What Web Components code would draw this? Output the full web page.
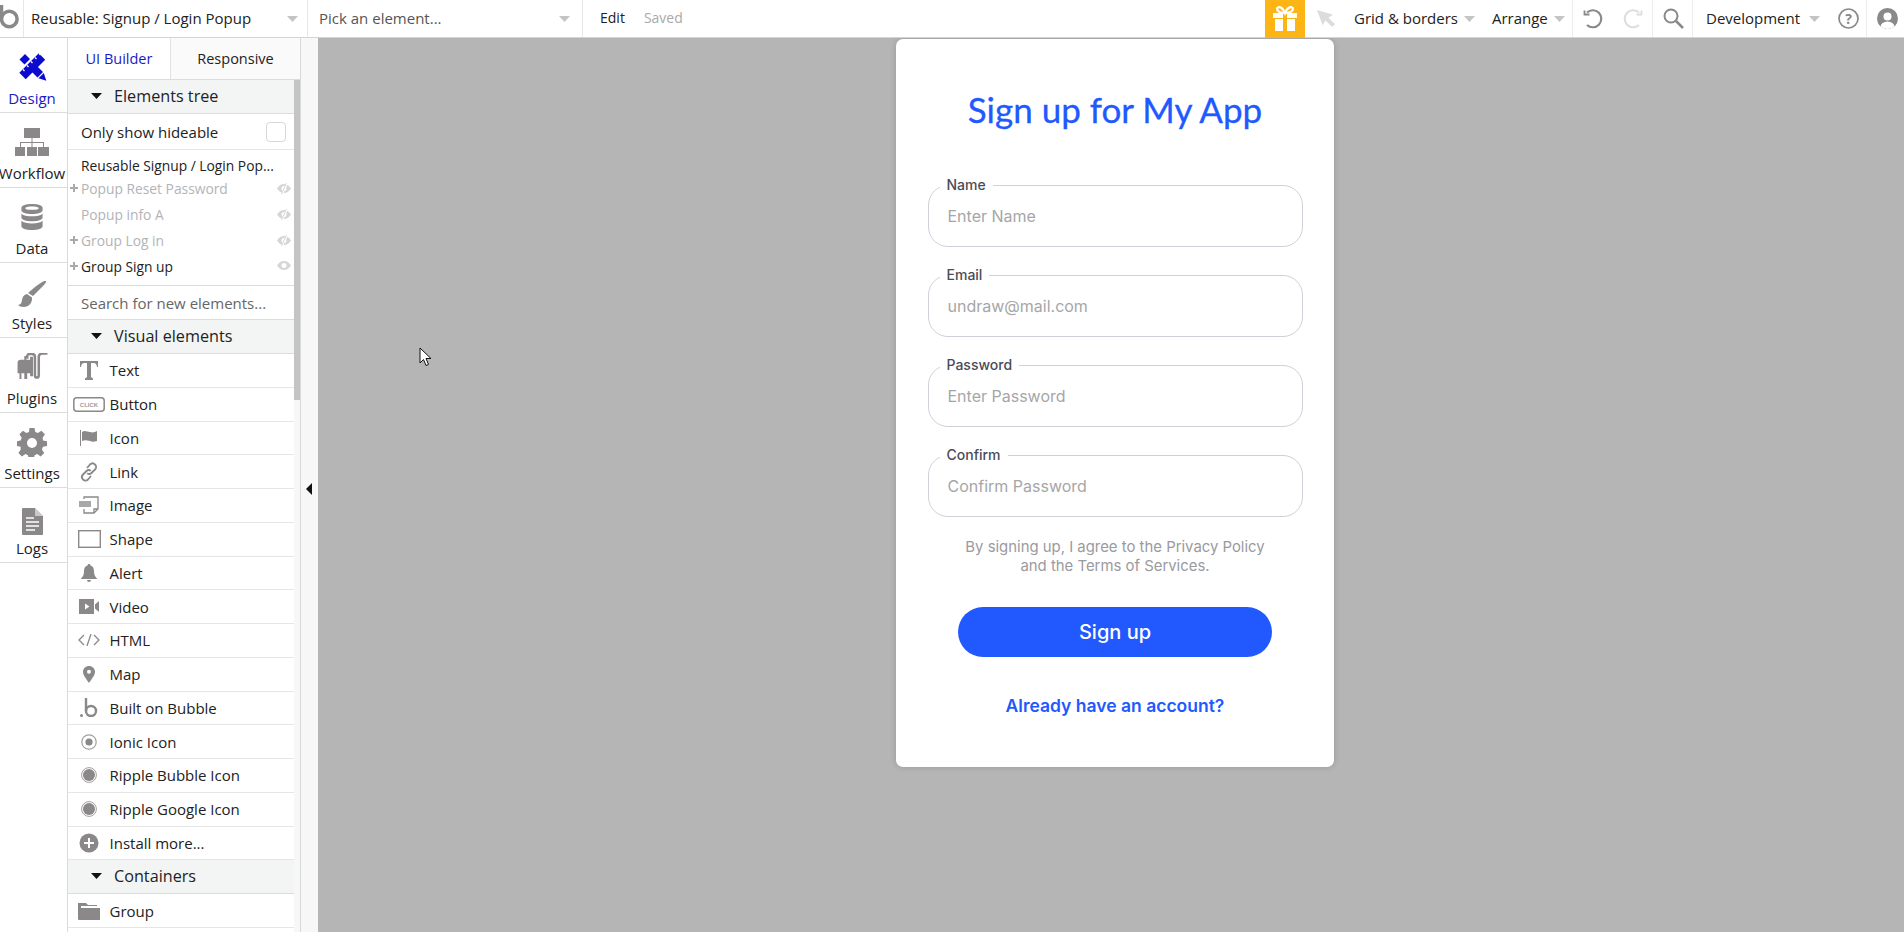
<!DOCTYPE html>
<html lang="en"><head><meta charset="utf-8"><title>Bubble editor</title>
<style>
html,body{margin:0;height:100%;overflow:hidden}
body{font-family:"Open Sans",sans-serif;color:#222;background:#b5b5b5}
editor-app{height:932px}
</style></head><body>
<editor-app>
  <top-bar slot="top"></top-bar>
  <side-nav slot="nav"></side-nav>
  <element-panel slot="panel"></element-panel>
  <signup-card slot="canvas"></signup-card>
</editor-app>
<script>
const I={
 design:'<svg width="29" height="28" viewBox="0 0 28 28"><path d="M23.500 3.500L4 23" stroke="#0b0bd0" stroke-width="9" fill="none"/><path d="M20.500 .5l1.500 1.500M16.500 4.500l1.500 1.500M12.500 8.500l1.500 1.500M8.500 12.500l1.500 1.500M4.500 16.500l1.500 1.500" stroke="#fff" stroke-width="1.200" fill="none"/><path d="M1 6.500L6.500 1 11.500 6 6 11.500zM10.500 16L16 10.500 24.500 19 19 24.500z" fill="#0b0bd0"/><path d="M20 25.300l5.300-5.300 2.500 7.800z" fill="#0b0bd0"/></svg>',
 workflow:'<svg width="34" height="28" viewBox="0 0 34 28" fill="#8a8888"><rect x="9" y="0" width="16" height="10"/><rect x="0" y="19" width="10" height="9"/><rect x="12" y="19" width="10" height="9"/><rect x="23" y="19" width="11" height="9"/><path d="M16.500 10h1v4h11.500v5h-1v-4h-10.500v4h-1v-4H6v4H5v-5h11.500z"/></svg>',
 data:'<svg width="22" height="26" viewBox="0 0 22 27" fill="#8a8888"><path fill-rule="evenodd" d="M11 0c6 0 11 1.500 11 4v2.500c0 2.500-5 4-11 4S0 9 0 6.500V4c0-2.500 5-4 11-4zm0 2.500C7 2.500 4 3.200 4 4.300S7 6 11 6s7-.6 7-1.700-3-1.800-7-1.800z"/><path d="M0 10c2 2 6 2.800 11 2.800S20 12 22 10v4c0 2.500-5 4-11 4S0 16.500 0 14zM0 17.500c2 2 6 2.800 11 2.800s9-.8 11-2.800V23c0 2.500-5 4-11 4S0 25.500 0 23z"/></svg>',
 styles:'<svg width="30" height="28" viewBox="0 0 30 28" fill="#8a8888"><path d="M29 0c.6 1-1 3-5 7l-8 8-5-3 7-6c5-4 10-7 11-6zM10 13l5 3.500c.5 5-3 9.500-8 9.500-3 0-5-1-6-2 3-.5 3.500-2 4-5 .5-3 2-5.500 5-6z"/></svg>',
 plugins:'<svg width="31" height="27" viewBox="0 0 31 28" fill="#8a8888"><path d="M3 7h4V3h2v4h4V4h3v20h-3v-3h-3v6H7v-6H4v6H2v-6H0V10c0-2 1.500-3 3-3z"/><path d="M10 6V4c0-2 1-3 3-3h2c2 0 3 1 3 3v19c0 1.500.7 2.500 2 2.500s2-1 2-2.500V4c0-2 1.500-3.500 3.500-3.500H31" fill="none" stroke="#8a8888" stroke-width="2.600"/></svg>',
 settings:'<svg width="30" height="30" viewBox="0 0 30 30"><path fill="#8a8888" fill-rule="evenodd" d="M12.500 1h5l.8 4 2.600 1.100 3.500-2.300 3.500 3.500-2.300 3.500L26 13.400l4 .8v4.800l-4 .8-1.100 2.600 2.300 3.500-3.500 3.500-3.500-2.300-2.600 1.100-.8 3.800h-5l-.8-3.800-2.600-1.100-3.500 2.300-3.500-3.500 2.300-3.500L3.600 19.800 0 19v-4.800l3.600-.8 1.100-2.600-2.300-3.500 3.500-3.500 3.500 2.300L12 5zM15 11a5 5 0 1 0 0 10 5 5 0 0 0 0-10z"/></svg>',
 logs:'<svg width="21" height="27" viewBox="0 0 21 27"><path fill="#8a8888" d="M1 0h12l8 8v18a1 1 0 0 1-1 1H1a1 1 0 0 1-1-1V1a1 1 0 0 1 1-1z"/><path d="M4 10h8M4 14h13M4 18h13M4 22h9" stroke="#fff" stroke-width="1.300"/><path d="M13 0v8h8" fill="#fff" opacity=".55"/></svg>',
 text:'<svg width="18" height="19" viewBox="0 0 18 19" fill="#8a8888"><path d="M0 0h18v6h-1c-.3-2.500-1.200-4-3.500-4H11v14l2 1.500V19H5v-1.500L7 16V2H4.500C2.200 2 1.300 3.500 1 6H0z"/></svg>',
 button:'<svg width="32" height="15" viewBox="0 0 32 15"><rect x=".8" y=".8" width="30.400" height="13.400" rx="3" fill="#fff" stroke="#8a8888" stroke-width="1.500"/><text x="16" y="9.800" font-family="Liberation Sans" font-size="6" font-weight="700" text-anchor="middle" fill="#9a9a9a">CLICK</text></svg>',
 icon:'<svg width="18" height="16" viewBox="0 0 18 16" fill="#8a8888"><rect width="1" height="16" x="0"/><path d="M2 2c3-2 5 0 8 0 3 1 5 0 7-1v10c-3 1-5 1-7 0-3-1-6-1-8 0z"/></svg>',
 link:'<svg width="20" height="20" viewBox="0 0 20 20" fill="none" stroke="#8a8888" stroke-width="1.800"><path d="M8 6l3-3.500c1.500-1.500 3.500-1.500 5 0s1.500 3.500 0 5l-3.500 3.500c-1.300 1.200-3 1.200-4.300.2"/><path d="M12 14l-3 3.500c-1.500 1.500-3.500 1.500-5 0s-1.500-3.500 0-5L7.500 9c1.300-1.200 3-1.200 4.300-.2"/></svg>',
 image:'<svg width="20" height="18" viewBox="0 0 20 18" fill="none" stroke="#8a8888" stroke-width="1.300"><path d="M5 3V1h14v12l-4 4H5v-4"/><path d="M19 13h-4v4"/><rect x="0" y="5" width="12" height="6" fill="#a8a8a8" stroke="none"/></svg>',
 shape:'<svg width="23" height="18" viewBox="0 0 23 18"><rect x=".7" y=".7" width="21.600" height="16.600" fill="#fff" stroke="#8a8888" stroke-width="1.400"/></svg>',
 alert:'<svg width="16" height="18" viewBox="0 0 16 18" fill="#8a8888"><path d="M8 0c1 0 1.500.6 1.500 1.500C12 2.300 13 4.500 13 7c0 4 1 5.500 3 7.500V15H0v-.5C2 12.500 3 11 3 7c0-2.500 1-4.700 3.500-5.500C6.500.6 7 0 8 0zM6 16h4c0 1.200-1 2-2 2s-2-.8-2-2z"/></svg>',
 video:'<svg width="20" height="15" viewBox="0 0 20 15"><rect width="15" height="15" fill="#8a8888"/><path d="M16 5.500l4-3.500v11l-4-3.500z" fill="#8a8888"/><path d="M6 4.500l4.500 3-4.500 3z" fill="#fff"/></svg>',
 html:'<svg width="22" height="12" viewBox="0 0 22 12" fill="none" stroke="#8a8888" stroke-width="1.300"><path d="M6 1L1 6l5 5M16 1l5 5-5 5M13 0L9 12"/></svg>',
 map:'<svg width="12" height="17" viewBox="0 0 12 17"><path fill="#8a8888" fill-rule="evenodd" d="M6 0c3.300 0 6 2.600 6 5.800C12 9.500 8 14 6 17 4 14 0 9.500 0 5.800 0 2.600 2.700 0 6 0zm0 3.800a2 2 0 1 0 0 4 2 2 0 0 0 0-4z"/></svg>',
 built:'<svg width="18" height="19" viewBox="0 0 18 19"><circle cx="1.500" cy="17.500" r="1.500" fill="#8a8888"/><path d="M6 0v13" stroke="#8a8888" stroke-width="2.400" fill="none"/><circle cx="11" cy="13" r="5" fill="none" stroke="#8a8888" stroke-width="2.400"/></svg>',
 ionic:'<svg width="16" height="16" viewBox="0 0 16 16"><circle cx="8" cy="8" r="7.200" fill="none" stroke="#a0a0a0" stroke-width="1.200"/><circle cx="8" cy="8" r="3.600" fill="#8a8888"/></svg>',
 ripple:'<svg width="16" height="16" viewBox="0 0 16 16"><circle cx="8" cy="8" r="7.400" fill="none" stroke="#a0a0a0" stroke-width="1"/><circle cx="8" cy="8" r="6" fill="#8a8888"/></svg>',
 more:'<svg width="20" height="20" viewBox="0 0 20 20"><circle cx="10" cy="10" r="9.500" fill="#8a8888"/><path d="M10 5v10M5 10h10" stroke="#fff" stroke-width="2"/></svg>',
 group:'<svg width="22" height="18" viewBox="0 0 22 18" fill="#8a8888"><path d="M0 1h8l2 2h9v1H3v2H0z"/><path d="M0 6h22v12H1a1 1 0 0 1-1-1z"/></svg>',
 eye:'<svg width="14" height="9" viewBox="0 0 14 9"><path fill="#d6d6d6" fill-rule="evenodd" d="M7 0c3 0 5.500 2 7 4.500C12.500 7 10 9 7 9S1.500 7 0 4.500C1.500 2 4 0 7 0zm0 2a2.500 2.500 0 1 0 0 5 2.500 2.500 0 0 0 0-5z"/></svg>',
 eyeoff:'<svg width="14" height="11" viewBox="0 0 14 11"><path fill="#d6d6d6" fill-rule="evenodd" d="M7 1c3 0 5.500 2 7 4.500C12.500 8 10 10 7 10S1.500 8 0 5.500C1.500 3 4 1 7 1zm0 2a2.500 2.500 0 1 0 0 5 2.500 2.500 0 0 0 0-5z"/><path d="M10 0L5 11" stroke="#fff" stroke-width="2"/><path d="M9.500 0L4.500 11" stroke="#d6d6d6" stroke-width="1"/></svg>'
};
const caret=c=>`<svg width="11" height="6" viewBox="0 0 11 6"><path d="M0 0h11L5.500 6z" fill="${c}"/></svg>`;
function def(name,css,html){
  customElements.define(name,class extends HTMLElement{
    constructor(){super();this.attachShadow({mode:'open'});}
    connectedCallback(){this.shadowRoot.innerHTML=`<style>${css}</style>`+(typeof html==='function'?html(this):html);}
  });
}
def('editor-app',`
 :host{display:grid;grid-template:38px 1fr/318px 1fr;width:1904px;background:#b5b5b5;position:relative}
 .top{grid-column:1/3;min-width:0}
 .left{display:flex;background:#fff;min-height:0;overflow:hidden}
 .canvas{display:flex;justify-content:center;align-items:flex-start;background:#b5b5b5;overflow:hidden;position:relative}
 .strip{width:18px;background:#f7f7f7;border-left:1px solid #d9d9d9;box-sizing:border-box;display:flex;align-items:center;justify-content:center}
 .cursor{position:absolute;left:101px;top:309px}
`,`<div class="top"><slot name="top"></slot></div>
 <div class="left"><slot name="nav"></slot><slot name="panel"></slot>
  <div class="strip"><svg width="6" height="12" viewBox="0 0 6 12" style="margin-top:8px;margin-left:-2px"><path d="M6 0v12L0 6z" fill="#111"/></svg></div></div>
 <div class="canvas"><slot name="canvas"></slot>
  <svg class="cursor" width="14" height="21" viewBox="0 0 14 21"><path d="M1 1v15l3.500-3.500 2.500 6 2.500-1-2.500-6H12z" fill="#fff" stroke="#111" stroke-width="1"/></svg></div>`);
def('top-select',`
 :host{display:flex;align-items:center;justify-content:space-between;box-sizing:border-box;height:37px;border-right:1px solid #e8e8e8;font-size:15px}
 span{margin-top:-2px;white-space:nowrap}
`,h=>`<span style="color:${h.getAttribute('color')||'#222'}">${h.getAttribute('label')}</span>${caret('#c4c4c4')}`);
def('top-menu',`
 :host{display:flex;align-items:center;gap:6px;font-size:15px;color:#222;white-space:nowrap}
 span{margin-top:-2px}
`,h=>`<span>${h.getAttribute('label')}</span>${caret('#c4c4c4')}`);
def('top-bar',`
 :host{display:flex;height:38px;box-sizing:border-box;background:#fff;border-bottom:1px solid #d4d4d4;align-items:stretch}
 .logo{width:24px;border-right:1px solid #e8e8e8;overflow:hidden;flex:none;box-sizing:border-box}
 top-select{flex:none}
 .sel1{width:284px;padding:0 9px 0 7px}.sel2{width:275px;padding:0 12px 0 11px}
 .edit{display:flex;align-items:center;font-size:14px;gap:19px;margin-left:17px;color:#222}
 .edit span,.edit i{margin-top:-2px}
 .edit i{font-style:normal;color:#a9a9a9}
 .sp{flex:1}
 .gift{width:40px;height:38px;background:#fdb515;display:flex;align-items:center;justify-content:center;flex:none}
 .arrow{width:49px;display:flex;align-items:center;flex:none;padding-left:11px;box-sizing:border-box}
 .sec{display:flex;align-items:center;flex:none;box-sizing:border-box;height:37px}
 .b{border-right:1px solid #ececec}
`,`<div class="logo"><svg width="24" height="37" viewBox="0 0 24 37"><path d="M1.500 5v14" stroke="#8a8888" stroke-width="3.500" fill="none"/><circle cx="9.300" cy="19" r="7.800" fill="none" stroke="#8a8888" stroke-width="3.500"/></svg></div>
 <top-select class="sel1" label="Reusable: Signup / Login Popup"></top-select>
 <top-select class="sel2" label="Pick an element..." color="#555"></top-select>
 <div class="edit"><span>Edit</span><i>Saved</i></div>
 <div class="sp"></div>
 <div class="gift"><svg width="26" height="26" viewBox="0 0 26 26"><path fill="#fff" d="M1 7h10v5H1zM15 7h10v5H15zM3 13h8v12H3zM15 13h8v12h-8z"/><path d="M13 7C11 2 8 .5 6 1.500S5 7 13 7c8 0 9-4.500 7-5.500S15 2 13 7z" fill="none" stroke="#fff" stroke-width="2.200"/></svg></div>
 <div class="arrow"><svg width="19" height="19" viewBox="0 0 20 20"><path d="M1 1l17 5-5 3 7 7-3 3-7-7-3 5z" fill="#dcdcdc"/></svg></div>
 <div class="sec b" style="width:219px"><top-menu label="Grid &amp; borders"></top-menu><top-menu label="Arrange" style="margin-left:17px"></top-menu></div>
 <div class="sec b" style="width:80px;padding-left:10px;gap:20px">
  <svg width="20" height="21" viewBox="0 0 20 21" fill="none" stroke="#8a8888" stroke-width="2.200"><path d="M4 4.500A8.500 8.500 0 1 1 4 17"/><path d="M1.500 2.500v4h5" stroke-width="1.800"/></svg>
  <svg width="20" height="21" viewBox="0 0 20 21" fill="none" stroke="#dedede" stroke-width="2.200"><path d="M16 4.500A8.500 8.500 0 1 0 16 17"/><path d="M18.500 2.500v4h-5" stroke-width="1.800"/></svg>
 </div>
 <div class="sec b" style="width:40px;padding-left:10px"><svg width="21" height="21" viewBox="0 0 21 21" fill="none" stroke="#8a8888"><circle cx="8" cy="8" r="6.500" stroke-width="2"/><path d="M13 13l7 7" stroke-width="2.500"/></svg></div>
 <div class="sec" style="padding-left:13px;width:137px"><top-menu label="Development" style="gap:9px"></top-menu></div>
 <div class="sec b" style="width:37px;padding-left:8px"><svg width="21" height="21" viewBox="0 0 21 21"><circle cx="10.500" cy="10.500" r="9.500" fill="none" stroke="#8a8888" stroke-width="1.700"/><text x="10.500" y="15.500" font-family="Open Sans" font-size="14" font-weight="700" text-anchor="middle" fill="#8a8888">?</text></svg></div>
 <div class="sec" style="width:37px;padding-left:10px"><svg width="21" height="21" viewBox="0 0 21 21"><defs><clipPath id="c"><circle cx="10.500" cy="10.500" r="10.500"/></clipPath></defs><circle cx="10.500" cy="10.500" r="10.500" fill="#8a8888"/><g clip-path="url(#c)" fill="#fff"><circle cx="10.500" cy="8.500" r="4"/><ellipse cx="10.500" cy="19" rx="7" ry="5.500"/></g></svg></div>`);
def('nav-item',`
 :host{display:flex;flex-direction:column;align-items:center;box-sizing:border-box;height:75px;border-bottom:1px solid #dcdcdc;font-size:15px;color:#222;white-space:nowrap;overflow:hidden;padding-right:3px}
 .i{height:50px;padding-top:8px;display:flex;align-items:center;justify-content:center;box-sizing:border-box;flex:none}
 .l{line-height:20px}
`,h=>`<div class="i" style="padding-top:${h.getAttribute('pt')||8}px">${I[h.getAttribute('icon')]}</div><div class="l" style="color:${h.hasAttribute('active')?'#1a1ac8':'#222'}">${h.getAttribute('label')}</div>`);
def('side-nav',`:host{display:block;width:68px;flex:none;box-sizing:border-box;border-right:1px solid #d9d9d9;height:894px;background:#fff}`,
 `<nav-item icon="design" label="Design" active></nav-item><nav-item icon="workflow" label="Workflow"></nav-item><nav-item icon="data" label="Data"></nav-item><nav-item icon="styles" label="Styles" pt="13"></nav-item><nav-item icon="plugins" label="Plugins" pt="6"></nav-item><nav-item icon="settings" label="Settings" pt="7"></nav-item><nav-item icon="logs" label="Logs" pt="17"></nav-item>`);
def('panel-head',`
 :host{display:flex;align-items:center;box-sizing:border-box;height:var(--h,34px);background:#f3f5f5;border-bottom:1px solid #dcdcdc;font-size:16.200px;color:#222;padding:0 0 2px 23px;gap:12px}
`,h=>`<svg width="11" height="6" viewBox="0 0 11 6"><path d="M0 0h11L5.500 6z" fill="#111"/></svg><span>${h.getAttribute('label')}</span>`);
def('el-row',`
 :host{display:flex;align-items:center;box-sizing:border-box;height:33.750px;border-bottom:1px solid #e6e6e6;font-size:15px;color:#222;white-space:nowrap}
 .i{width:42px;padding-left:2px;display:flex;justify-content:center;flex:none;box-sizing:border-box;margin-left:-1px;margin-right:.5px}
`,h=>`<div class="i">${I[h.getAttribute('icon')]}</div><span>${h.getAttribute('label')}</span>`);
def('tree-row',`
 :host{display:flex;align-items:center;height:26px;font-size:13.800px;white-space:nowrap;position:relative;padding-left:13px;color:#b2b4b6}
 :host([on]){color:#222}
 .p{position:absolute;left:2px;top:50%;margin-top:-4px;width:8px;height:8px}
 .e{position:absolute;right:3px;top:50%;margin-top:-5px;line-height:0}
`,h=>`${h.hasAttribute('plus')?'<svg class="p" viewBox="0 0 8 8"><path d="M4 0v8M0 4h8" stroke="#aaa" stroke-width="2"/></svg>':''}<span>${h.getAttribute('label')}</span><span class="e">${h.hasAttribute('on')?I.eye:I.eyeoff}</span>`);
def('element-panel',`
 :host{display:flex;flex-direction:column;width:232px;flex:none;height:894px;overflow:hidden;background:#fff}
 .tabs{display:flex;height:42px;box-sizing:border-box;border-bottom:1px solid #dcdcdc;font-size:14.500px;flex:none}
 .tabs div{display:flex;align-items:center;justify-content:center}
 .t1{width:103px;color:#1a1ac8;border-right:1px solid #e2e2e2;box-sizing:border-box}
 .t2{flex:1;background:#fafafa;color:#222}
 .body{flex:1;display:flex;min-height:0}
 .list{width:226px;flex:none;min-width:0;overflow:hidden}
 .bar{flex:1;background:#f7f7f7}
 .thumb{background:#c4c4c4;height:320px}
 .only{display:flex;align-items:center;justify-content:space-between;height:36px;box-sizing:border-box;border-bottom:1px solid #e6e6e6;padding:0 8px 0 13px;font-size:15px}
 .box{width:20px;height:20px;border:1px solid #d8d8d8;border-radius:4px;box-sizing:border-box}
 .tree{height:136px;box-sizing:border-box;border-bottom:1px solid #dcdcdc}
 .root{height:25px;display:flex;align-items:flex-end;padding-left:13px;font-size:13.800px;color:#222;white-space:nowrap;overflow:hidden}
 .search{height:33px;box-sizing:border-box;display:flex;align-items:center;padding-left:13px;font-size:15px;color:#666}
`,`<div class="tabs"><div class="t1">UI Builder</div><div class="t2">Responsive</div></div>
 <div class="body"><div class="list">
  <panel-head label="Elements tree"></panel-head>
  <div class="only"><span>Only show hideable</span><div class="box"></div></div>
  <div class="tree">
   <div class="root">Reusable Signup / Login Pop...</div>
   <tree-row label="Popup Reset Password" plus></tree-row>
   <tree-row label="Popup info A"></tree-row>
   <tree-row label="Group Log in" plus></tree-row>
   <tree-row label="Group Sign up" plus on></tree-row>
  </div>
  <div class="search">Search for new elements...</div>
  <panel-head label="Visual elements" style="--h:35px;border-top:1px solid #dcdcdc"></panel-head>
  <el-row icon="text" label="Text"></el-row>
  <el-row icon="button" label="Button"></el-row>
  <el-row icon="icon" label="Icon"></el-row>
  <el-row icon="link" label="Link"></el-row>
  <el-row icon="image" label="Image"></el-row>
  <el-row icon="shape" label="Shape"></el-row>
  <el-row icon="alert" label="Alert"></el-row>
  <el-row icon="video" label="Video"></el-row>
  <el-row icon="html" label="HTML"></el-row>
  <el-row icon="map" label="Map"></el-row>
  <el-row icon="built" label="Built on Bubble"></el-row>
  <el-row icon="ionic" label="Ionic Icon"></el-row>
  <el-row icon="ripple" label="Ripple Bubble Icon"></el-row>
  <el-row icon="ripple" label="Ripple Google Icon"></el-row>
  <el-row icon="more" label="Install more..."></el-row>
  <panel-head label="Containers"></panel-head>
  <el-row icon="group" label="Group"></el-row>
 </div><div class="bar"><div class="thumb"></div></div></div>`);
def('form-field',`
 :host{display:block}
 fieldset{margin:0;box-sizing:border-box;height:70px;border:1px solid #cfd0d8;border-radius:20px;padding:0 0 7px 19px;display:flex;align-items:center}
 legend{font:500 14px/16px Inter,sans-serif;color:#4b4b57;padding:0 7px;margin-left:-8px}
 span{font:400 16px/20px Inter,sans-serif;color:#a6a6a8}
`,h=>`<fieldset><legend>${h.getAttribute('label')}</legend><span>${h.getAttribute('ph')}</span></fieldset>`);
def('signup-card',`
 :host{display:flex;flex-direction:column;align-items:center;width:438px;height:728px;box-sizing:border-box;background:#fff;border-radius:7px;margin:1px 0 0 8px;box-shadow:0 0 6px rgba(0,0,0,.16);font-family:Inter,sans-serif;padding-top:48px}
 h1{margin:0;font:400 35px/44px Lato,sans-serif;-webkit-text-stroke:.3px #2159ff;color:#2159ff;white-space:nowrap}
 .f{display:flex;flex-direction:column;gap:20px;width:375px;margin-top:46px}
 p{margin:21px 0 0;font-size:14.900px;line-height:18.500px;color:#9a9a9f;text-align:center}
 .btn{margin-top:32px;width:314px;height:50px;border-radius:25px;background:#2159ff;color:#fff;font-size:20px;font-weight:500;display:flex;align-items:center;justify-content:center}
 a{margin-top:36px;font-size:17.500px;font-weight:600;color:#2159ff;line-height:26px}
`,`<h1>Sign up for My App</h1>
 <div class="f">
  <form-field label="Name" ph="Enter Name"></form-field>
  <form-field label="Email" ph="undraw@mail.com"></form-field>
  <form-field label="Password" ph="Enter Password"></form-field>
  <form-field label="Confirm" ph="Confirm Password"></form-field>
 </div>
 <p>By signing up, I agree to the Privacy Policy<br>and the Terms of Services.</p>
 <div class="btn">Sign up</div>
 <a>Already have an account?</a>`);
</script>
</body></html>
